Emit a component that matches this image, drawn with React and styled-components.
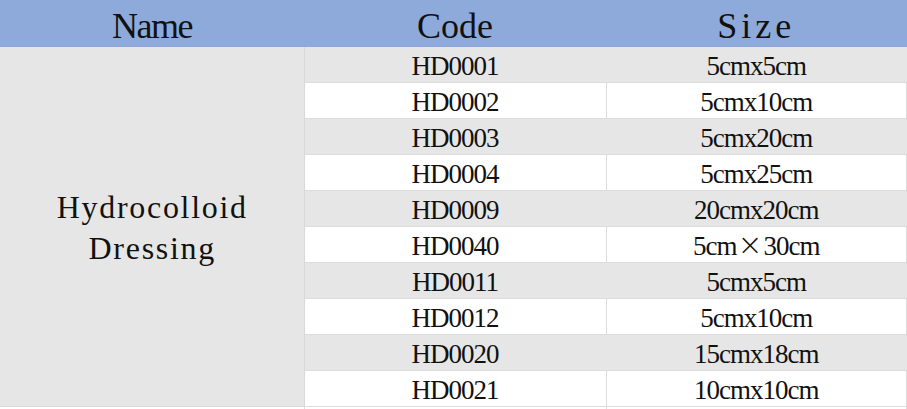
import React from "react";
import styled, { createGlobalStyle } from "styled-components";

const GlobalStyle = createGlobalStyle`
    body {
        margin: 0;
        background: #ffffff;
        font-family: "Liberation Serif", "Noto Sans CJK SC", serif;
    }
`;

const Table = styled.table`
    width: 907px;
    border-collapse: collapse;
    table-layout: fixed;
    color: #111111;
`;

const HeadCell = styled.th`
    height: 41px;
    padding: 6px 0 0;
    background: #8eaadb;
    font-weight: normal;
    font-size: 36px;
    line-height: 41px;
    letter-spacing: ${(p) => p.$spacing || 0}px;
    text-align: center;
    vertical-align: top;
`;

const NameCell = styled.td`
    background: #e6e6e6;
    border-right: 1px solid #d9d9d9;
    border-bottom: 1px solid #d9d9d9;
    padding: 3px 0 0 1px;
    font-size: 32px;
    line-height: 41px;
    letter-spacing: 1.7px;
    text-align: center;
    vertical-align: middle;
`;

const Cell = styled.td`
    height: 32px;
    padding: 3px 0 0;
    background: ${(p) => (p.$shade ? "#e6e6e6" : "#ffffff")};
    border-right: 1px solid ${(p) => (p.$shade ? "#e6e6e6" : "#dcdcdc")};
    border-bottom: 1px solid #dcdcdc;
    font-size: 27px;
    line-height: 32px;
    letter-spacing: -1px;
    text-align: center;
    vertical-align: top;
    white-space: nowrap;
`;

// full-width multiplication sign, about one em wide
const Times = styled.span`
    display: inline-block;
    width: 27px;
    text-align: center;
    font-family: "DejaVu Sans", sans-serif;
    font-weight: 200;
    font-size: 30px;
    line-height: 1;
    letter-spacing: 0;
`;

const rows = [
    ["HD0001", "5cmx5cm"],
    ["HD0002", "5cmx10cm"],
    ["HD0003", "5cmx20cm"],
    ["HD0004", "5cmx25cm"],
    ["HD0009", "20cmx20cm"],
    ["HD0040", "5cm×30cm"],
    ["HD0011", "5cmx5cm"],
    ["HD0012", "5cmx10cm"],
    ["HD0020", "15cmx18cm"],
    ["HD0021", "10cmx10cm"],
];

const renderSize = (text) => {
    if (!text.includes("×")) return text;
    const [a, b] = text.split("×");
    return (
        <>
            {a}
            <Times>×</Times>
            {b}
        </>
    );
};

const App = () => {
    return (
        <>
            <GlobalStyle />
            <Table>
                <colgroup>
                    <col style={{ width: "304px" }} />
                    <col style={{ width: "302px" }} />
                    <col />
                </colgroup>
                <thead>
                    <tr>
                        <HeadCell $spacing={-1.5}>Name</HeadCell>
                        <HeadCell>Code</HeadCell>
                        <HeadCell $spacing={4}>Size</HeadCell>
                    </tr>
                </thead>
                <tbody>
                    {rows.map(([code, size], i) => (
                        <tr key={code}>
                            {i === 0 && (
                                <NameCell rowSpan={rows.length}>
                                    Hydrocolloid
                                    <br />
                                    Dressing
                                </NameCell>
                            )}
                            <Cell $shade={i % 2 === 0}>{code}</Cell>
                            <Cell $shade={i % 2 === 0}>{renderSize(size)}</Cell>
                        </tr>
                    ))}
                    <tr>
                        <Cell />
                        <Cell />
                        <Cell />
                    </tr>
                </tbody>
            </Table>
        </>
    );
};

export default App;
